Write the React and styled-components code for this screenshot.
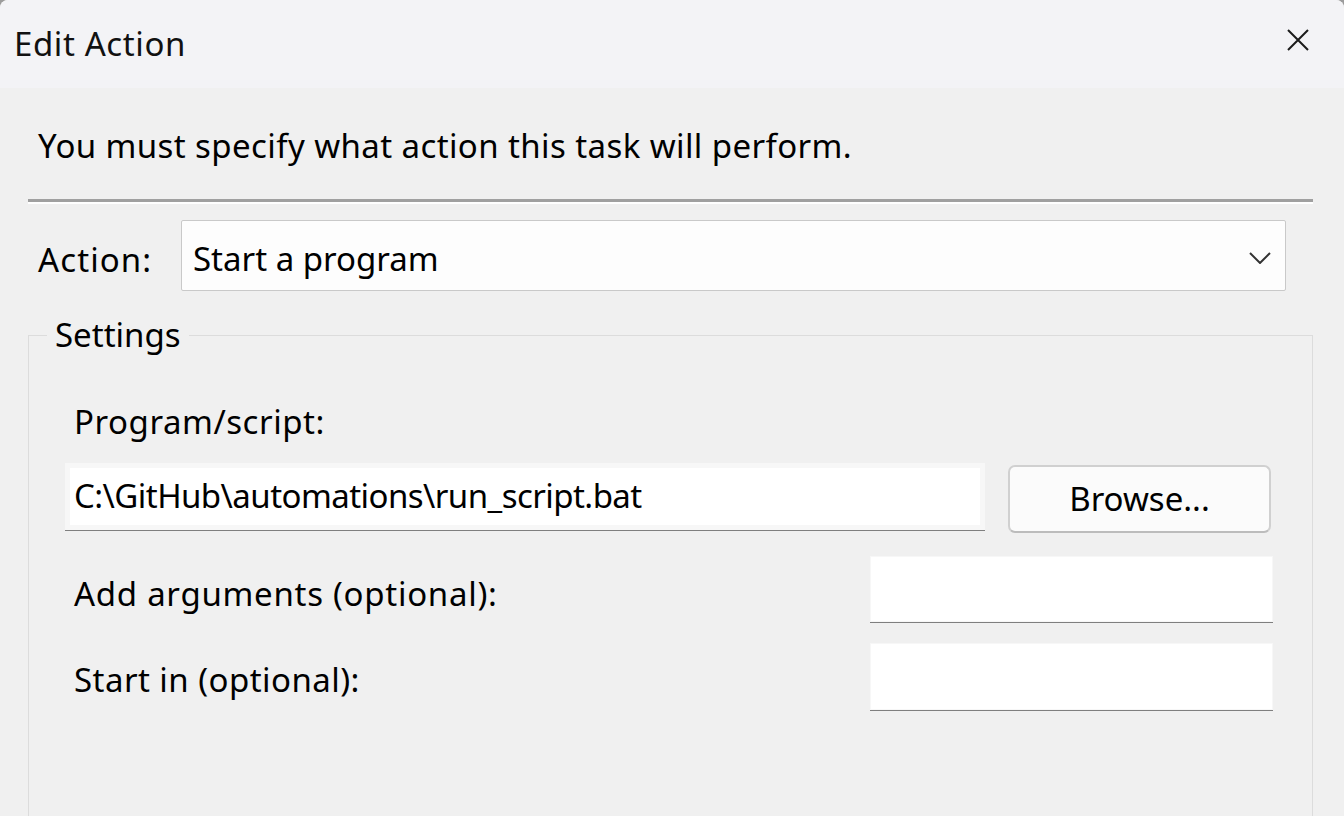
import React from "react";
import styled, { createGlobalStyle } from "styled-components";

const Global = createGlobalStyle`
  html, body { margin: 0; padding: 0; background: #9c9c9c; overflow: hidden; }
  body { font-family: "Noto Sans", "Open Sans", sans-serif; color: #000; }
  * { box-sizing: border-box; }
`;

const Window = styled.div`
  width: 1344px;
  height: 816px;
  display: flex;
  flex-direction: column;
  background: #f0f0f0;
  border-radius: 8px 8px 0 0;
  overflow: hidden;
`;

const TitleBar = styled.div`
  height: 88px;
  flex: none;
  display: flex;
  align-items: center;
  justify-content: space-between;
  background: #f3f3f6;
  padding-left: 14px;
`;

const Title = styled.div`
  font-size: 33px;
  line-height: 46px;
  font-weight: 400;
  letter-spacing: 0.6px;
  color: #111;
`;

const CloseButton = styled.div`
  width: 92px;
  height: 88px;
  display: flex;
  align-items: center;
  justify-content: center;
  margin-top: -8px;
`;

const Body = styled.div`
  flex: 1;
  display: flex;
  flex-direction: column;
  padding: 0 31px 0 28px;
`;

const Text = styled.div`
  font-size: 33px;
  line-height: 46px;
  white-space: nowrap;
  letter-spacing: ${(p) => p.$ls || 0}px;
  margin-left: ${(p) => p.$left || 0}px;
  margin-top: ${(p) => p.$top || 0}px;
`;

const Separator = styled.div`
  margin-top: 30px;
  height: 5px;
  border-top: 3px solid #a0a0a0;
  border-bottom: 2px solid #ffffff;
`;

const ActionRow = styled.div`
  margin-top: 16px;
  display: flex;
  align-items: flex-start;
`;

const Select = styled.div`
  margin-left: auto;
  margin-right: 27px;
  width: 1105px;
  height: 71px;
  background: #fdfdfd;
  border: 1px solid #c9c9c9;
  border-radius: 2px;
  display: flex;
  align-items: flex-start;
  justify-content: space-between;
  padding: 15px 14px 0 11px;
`;

const SelectValue = styled.span`
  font-size: 33px;
  line-height: 46px;
`;

const Chevron = styled.svg`
  margin-top: 16px;
`;

const Group = styled.fieldset`
  margin: 21px 0 0 0;
  padding: 41px 0 0 0;
  border: 1px solid #dcdcdc;
  min-height: 600px;
  min-width: 0;
`;

const Legend = styled.legend`
  margin-left: 18px;
  padding: 0 8px;
  font-size: 33px;
  line-height: 46px;
`;

const Row = styled.div`
  display: flex;
  align-items: flex-start;
  margin-top: ${(p) => p.$top}px;
`;

const Input = styled.div`
  width: ${(p) => p.$w}px;
  height: ${(p) => p.$h}px;
  margin-left: ${(p) => p.$left || 0}px;
  background: #ffffff;
  box-shadow: inset 0 0 0 ${(p) => p.$ring || 1}px #f7f7f7;
  border-bottom: 1px solid #7f7f7f;
  padding: 10px 0 0 9px;
  font-size: 33px;
  line-height: 46px;
  letter-spacing: -0.55px;
  white-space: nowrap;
`;

const Button = styled.div`
  margin: 2px 0 0 23px;
  width: 263px;
  height: 68px;
  background: #fbfbfb;
  border: 2px solid #d0d0d0;
  border-bottom-color: #bcbcbc;
  border-radius: 7px;
  display: flex;
  align-items: center;
  justify-content: center;
  font-size: 33px;
  line-height: 46px;
`;

const Label = styled.div`
  font-size: 33px;
  line-height: 46px;
  white-space: nowrap;
  letter-spacing: ${(p) => p.$ls}px;
  width: ${(p) => p.$w}px;
  margin-left: 45px;
  padding-top: ${(p) => p.$pt}px;
`;

export default function App() {
  return (
    <>
      <Global />
      <Window>
        <TitleBar>
          <Title>Edit Action</Title>
          <CloseButton>
            <svg width="22" height="22" viewBox="0 0 22 22">
              <path d="M1 1 L21 21 M21 1 L1 21" stroke="#1b1b1b" strokeWidth="2" fill="none" />
            </svg>
          </CloseButton>
        </TitleBar>
        <Body>
          <Text $left={10} $top={35} $ls={0.4}>You must specify what action this task will perform.</Text>
          <Separator />
          <ActionRow>
            <Text $left={10} $top={17} $ls={1.1}>Action:</Text>
            <Select>
              <SelectValue>Start a program</SelectValue>
              <Chevron width="22" height="12" viewBox="0 0 22 12">
                <path d="M1 1 L11 11 L21 1" stroke="#333" strokeWidth="2" fill="none" />
              </Chevron>
            </Select>
          </ActionRow>
          <Group>
            <Legend>Settings</Legend>
            <Label $pt={0} $ls={0.55}>Program/script:</Label>
            <Row $top={18}>
              <Input $w={920} $h={68} $left={36} $ring={5}>C:\GitHub\automations\run_script.bat</Input>
              <Button>Browse...</Button>
            </Row>
            <Row $top={23}>
              <Label $w={796} $pt={15} $ls={0.72}>Add arguments (optional):</Label>
              <Input $w={403} $h={67} />
            </Row>
            <Row $top={20}>
              <Label $w={796} $pt={14} $ls={0.45}>Start in (optional):</Label>
              <Input $w={403} $h={68} />
            </Row>
          </Group>
        </Body>
      </Window>
    </>
  );
}
